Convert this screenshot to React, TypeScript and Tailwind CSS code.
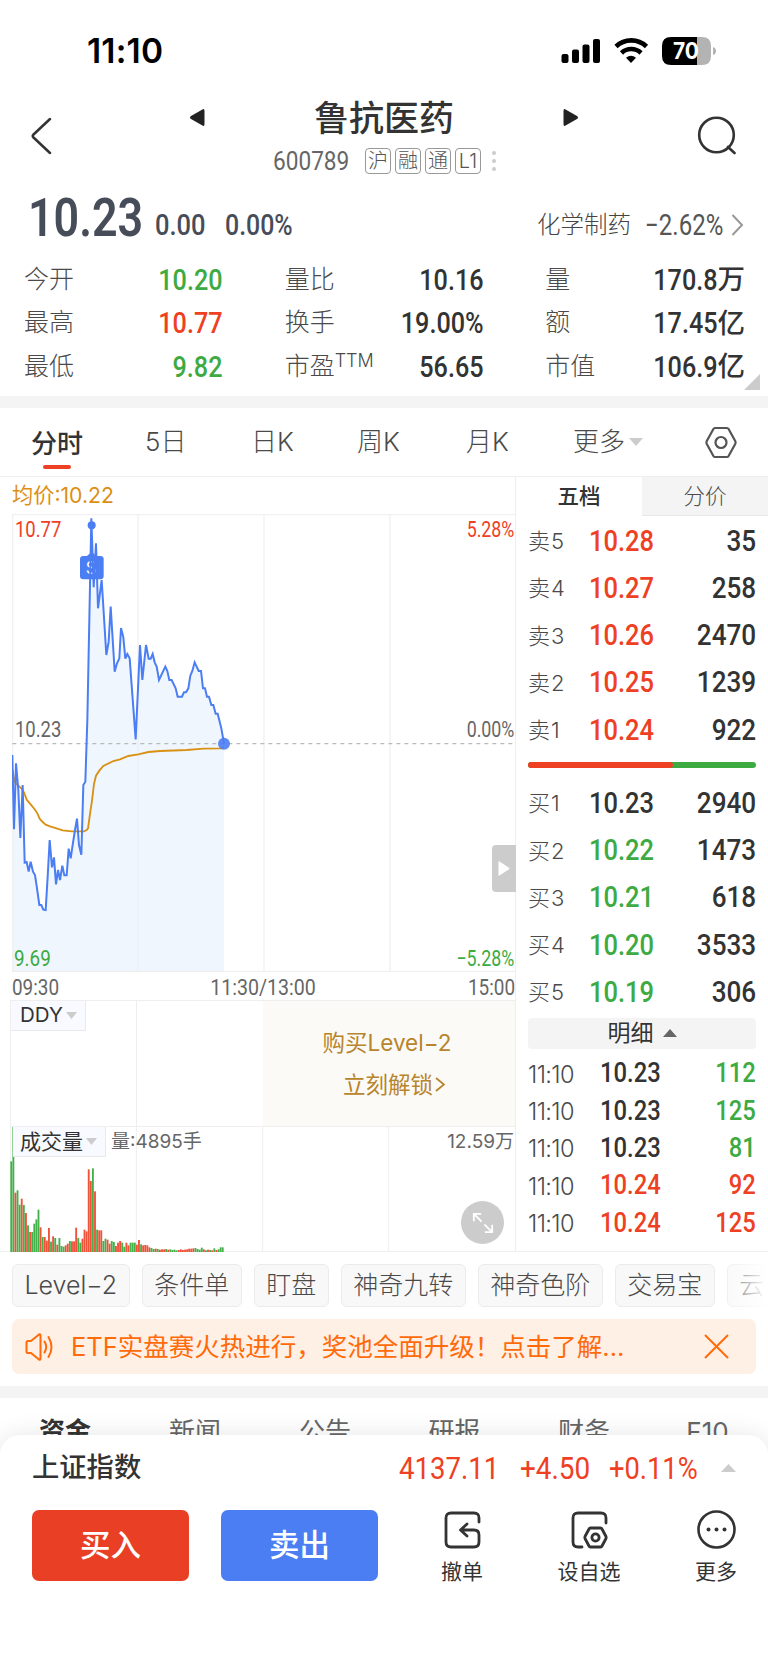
import type { ReactNode } from 'react';
import clsx from 'clsx';

const quotes = [
  { label: '今开', value: '10.20', color: 'text-[#3daa42]' },
  { label: '量比', value: '10.16', color: 'text-[#333]' },
  { label: '量', value: '170.8', unit: '万', color: 'text-[#333]' },
  { label: '最高', value: '10.77', color: 'text-[#ee4023]' },
  { label: '换手', value: '19.00%', color: 'text-[#333]' },
  { label: '额', value: '17.45', unit: '亿', color: 'text-[#333]' },
  { label: '最低', value: '9.82', color: 'text-[#3daa42]' },
  { label: '市盈', sup: 'TTM', value: '56.65', color: 'text-[#333]' },
  { label: '市值', value: '106.9', unit: '亿', color: 'text-[#333]' },
];

const asks = [
  ['卖5', '10.28', '35'],
  ['卖4', '10.27', '258'],
  ['卖3', '10.26', '2470'],
  ['卖2', '10.25', '1239'],
  ['卖1', '10.24', '922'],
];

const bids = [
  ['买1', '10.23', '2940'],
  ['买2', '10.22', '1473'],
  ['买3', '10.21', '618'],
  ['买4', '10.20', '3533'],
  ['买5', '10.19', '306'],
];

const trades = [
  { price: '10.23', vol: '112', up: false },
  { price: '10.23', vol: '125', up: false },
  { price: '10.23', vol: '81', up: false },
  { price: '10.24', vol: '92', up: true },
  { price: '10.24', vol: '125', up: true },
];

const chips = ['Level−2', '条件单', '盯盘', '神奇九转', '神奇色阶', '交易宝', '云'];

const pricePoints =
  '37,723 42,946 48,748 55,828 61,972 68,813 74,1046 80,1044 86,1073 92,1043 99,1073 105,1083 111,1123 118,1173 124,1173 130,1187 137,1188 143,1088 149,978 156,1060 162,1030 168,1111 174,1068 180,1098 187,1055 193,1084 200,1084 206,1004 212,1033 218,993 225,948 231,914 237,993 244,1022 250,813 256,803 262,618 274,13 281,220 288,88 294,283 305,198 319,423 326,383 332,278 344,473 351,448 358,433 363,342 370,370 376,434 382,420 389,433 407,676 420,393 427,498 438,393 446,434 452,434 458,420 464,445 470,458 477,498 496,458 502,471 508,498 515,498 527,523 533,548 546,548 552,535 558,535 565,523 571,485 577,471 584,445 596,471 603,471 609,523 615,523 621,548 627,548 634,573 640,573 647,599 653,599 664,643 672,689';

const avgPoints =
  '38,770 44,805 55,815 64,823 72,835 80,857 92,871 105,887 112,898 119,914 128,924 137,932 150,937 160,940 188,949 215,952 252,952 260,948 264,943 270,900 276,860 282,810 288,785 298,770 310,756 340,741 360,736 385,726 415,721 445,714 480,711 560,708 610,704 664,703 672,700';

// one bar per minute, g = down, r = up
const volumes =
  'g272 g375 r178 g185 g142 r160 g141 r117 g80 r60 g60 g85 g98 g127 r74 g45 r45 r34 r72 g31 r47 g42 r22 g42 g18 g16 r20 r25 g33 r32 r32 r73 g42 g28 r40 r67 r62 r248 r213 g251 r182 g67 r65 r65 g33 g40 r37 r25 g33 g30 r18 r28 r33 g28 g16 r28 r20 g28 g28 g28 r22 r36 g23 r20 r21 r20 r14 g12 g9 r10 g9 r7 r8 r8 g9 r7 g8 g6 g7 g5 r6 r8 r6 r7 r8 r10 r10 r11 g12 g9 g7 g13 r8 g5 r7 g6 r5 g11 r6 g8 g14 g14'.split(' ');

function Num({ children, className }: { children: ReactNode; className?: string }) {
  return (
    <span className={clsx("inline-block whitespace-nowrap font-['Roboto',sans-serif]", className)}>
      {children}
    </span>
  );
}

function StatusBar() {
  return (
    <div className="flex h-[88px] items-start justify-between pl-[87px] pr-[52px]">
      <span className="mt-[33px] text-[33.500px] leading-9 font-semibold tracking-[0.2px] text-black">11:10</span>
      <div className="mt-[37px] flex items-center">
        <svg className="h-7 w-[155px]" viewBox="0 0 155 28">
          <g fill="#000">
            <rect x="0.5" y="17" width="7" height="9" rx="2" />
            <rect x="11" y="12.500" width="7" height="13.500" rx="2" />
            <rect x="21.500" y="7.500" width="7" height="18.500" rx="2" />
            <rect x="32" y="2" width="7" height="24" rx="2" />
            <path d="M70 26l-5-5.200q5-4 10 0z" />
            <path d="M101 9q0-9 9-9h26v28h-26q-9 0-9-9z" />
          </g>
          <g fill="none" stroke="#000" strokeWidth="4.600">
            <path d="M55 9.500a22 22 0 0 1 30.500 0" />
            <path d="M60.500 16a14 14 0 0 1 19.500 0" />
          </g>
          <path d="M136 0h5q9 0 9 9v10q0 9-9 9h-5z" fill="#b3b3b3" />
          <path d="M152 10q3 1 3 4t-3 4z" fill="#b3b3b3" />
          <text x="112" y="22" fontSize="22.500" fontWeight="700" fill="#fff" fontFamily="Inter" textLength="26" lengthAdjust="spacingAndGlyphs">70</text>
        </svg>
      </div>
    </div>
  );
}

function Header() {
  return (
    <header className="flex h-[97px] items-start pl-[31px] pr-[32px]">
      <svg className="mt-[29px] h-[38px] w-[21px]" viewBox="0 0 21 38" fill="none" stroke="#333" strokeWidth="2.500" strokeLinecap="round">
        <path d="M19 2L2.500 17.500q-1.500 1.500 0 3L19 36" />
      </svg>
      <div className="ml-[138px] flex w-[388px] flex-col items-center">
        <div className="flex w-full items-center justify-between pt-1">
          <svg className="h-[17px] w-[15px]" viewBox="0 0 15 17" fill="#222">
            <path d="M14.500 2v13q0 3-2.500 1.300L1 10q-2-1.500 0-3L12 .7q2.500-1.700 2.500 1.300z" />
          </svg>
          <h1 className="pt-0.5 text-[35px] leading-[48px] font-medium text-[#333]">鲁抗医药</h1>
          <svg className="h-[17px] w-[15px]" viewBox="0 0 15 17" fill="#222">
            <path d="M.5 2v13q0 3 2.500 1.300L14 10q2-1.500 0-3L3 .7Q.5-1 .5 2z" />
          </svg>
        </div>
        <div className="mt-[6px] flex h-[26px] w-full items-center pl-[83px]">
          <Num className="w-[92px] origin-left scale-x-[0.87] text-[26px] leading-[26px] text-[#666]">600789</Num>
          <div className="flex gap-1">
            {['沪', '融', '通', 'L1'].map((t) => (
              <span key={t} className="flex h-[26px] w-[26px] items-center justify-center rounded-[4px] border-[1.500px] border-[#999] text-[20px] leading-none font-light text-[#555]">
                {t}
              </span>
            ))}
          </div>
          <div className="ml-[11px] flex flex-col gap-1">
            <i className="size-1 rounded-full bg-[#ccc]" />
            <i className="size-1 rounded-full bg-[#ccc]" />
            <i className="size-1 rounded-full bg-[#ccc]" />
          </div>
        </div>
      </div>
      <svg className="mt-7 ml-auto h-[40px] w-[39px]" viewBox="0 0 39 40" fill="none" stroke="#333" strokeWidth="2.600" strokeLinecap="round">
        <circle cx="19.500" cy="19" r="17.300" />
        <path d="M31 31l6.500 6" />
      </svg>
    </header>
  );
}

function Summary() {
  return (
    <section className="h-[211px]">
      <div className="flex h-[72px] items-end pr-6 pl-[28px]">
        <Num className="mb-[7px] w-[127px] origin-left scale-x-[0.83] text-[54px] leading-[64px] font-semibold text-[#474c59]">10.23</Num>
        <Num className="mb-[14px] w-[70px] origin-left scale-x-[0.85] text-[30px] leading-[36px] font-medium text-[#474c59]">0.00</Num>
        <Num className="mb-[14px] origin-left scale-x-[0.83] text-[30px] leading-[36px] font-medium text-[#474c59]">0.00%</Num>
        <div className="mb-[14px] ml-auto flex h-9 items-center">
          <span className="text-[23.500px] font-light text-[#444]">化学制药</span>
          <Num className="ml-[14px] w-[86px] origin-left scale-x-[0.83] text-[29px] leading-9 text-[#555]">−2.62%</Num>
          <svg className="h-[22px] w-[13px]" viewBox="0 0 13 22" fill="none" stroke="#999" strokeWidth="2">
            <path d="M1.500 1L11 11l-9.500 10" />
          </svg>
        </div>
      </div>
      <div className="relative grid grid-cols-3 gap-x-[62px] pt-[0.500px] pr-6 pl-[24px]">
        {quotes.map((q) => (
          <div key={q.label} className="flex h-[43.500px] items-center justify-between">
            <span className="text-[25px] font-light text-[#4a4a4a]">
              {q.label}
              {q.sup && <sup className="-top-2 text-[18px] leading-none">{q.sup}</sup>}
            </span>
            <span className={clsx('flex items-center', q.color)}>
              <Num className="origin-right scale-x-[0.84] text-[30px] font-medium">{q.value}</Num>
              {q.unit && <span className="-mr-px text-[27.500px] leading-9 font-medium">{q.unit}</span>}
            </span>
          </div>
        ))}
        <svg className="absolute right-2 -bottom-[2px] size-4" viewBox="0 0 16 16" fill="#ccc">
          <path d="M16 0v16H0z" />
        </svg>
      </div>
    </section>
  );
}

function PeriodTabs() {
  return (
    <nav className="flex h-[69px] items-center border-b border-[#eee] pl-[31px] text-[26px] leading-[40px] font-light text-[#4a4a4a]">
      <div className="flex w-[114px] flex-col pt-2">
        <span className="font-medium text-[#333]">分时</span>
        <i className="mt-[1px] ml-[12px] h-1 w-7 rounded-full bg-[#ee4023]" />
      </div>
      <span className="w-[106px]">5日</span>
      <span className="w-[106px]">日K</span>
      <span className="w-[109px]">周K</span>
      <span className="w-[107px]">月K</span>
      <span>更多</span>
      <svg className="ml-1 h-2 w-[14px]" viewBox="0 0 14 8" fill="#ccc">
        <path d="M0 0h14L7 8z" />
      </svg>
      <svg className="ml-[62px] h-[33px] w-[32px]" viewBox="0 0 32 33" fill="none" stroke="#555" strokeWidth="2.200">
        <path d="M10 2h12q1 0 1.600 1l6.600 12q.7 1.500 0 3l-6.600 12q-.6 1-1.600 1H10q-1 0-1.600-1L1.800 18q-.7-1.500 0-3L8.400 3Q9 2 10 2z" />
        <circle cx="16" cy="16.500" r="5.500" />
      </svg>
    </nav>
  );
}

function PriceChart() {
  return (
    <div className="relative h-[459px]">
      <svg className="ml-[12px] block h-[458px] w-[504px]" viewBox="36 0 1512 1374">
        <polygon points={`37,1374 ${pricePoints} 672,1374`} fill="#eff6fe" />
        <g stroke="#eee" strokeWidth="4" strokeOpacity="0.8">
          <path d="M38 0V1374M414 0V1374M792 0V1374M1170 0V1374" />
          <path d="M36 2H1548M36 1372H1548" />
        </g>
        <path d="M37 689H1548" stroke="#bbb" strokeWidth="4" strokeDasharray="12 12" />
        <polyline points={avgPoints} fill="none" stroke="#d99114" strokeWidth="5.500" />
        <rect x="240" y="126" width="71" height="70" rx="10" fill="#4b7df3" />
        <path d="M258 128l17-14 17 14z" fill="#4b7df3" />
        <text x="257" y="179" fontSize="50" fontFamily="Inter" fill="#fff">S</text>
        <polyline points={pricePoints} fill="none" stroke="#4b7df3" strokeWidth="6" />
        <circle cx="275" cy="34" r="12" fill="#4b7df3" />
        <circle cx="672" cy="689" r="18" fill="#4b7df3" fillOpacity="0.9" />
      </svg>
      {/* axis labels over the plot */}
      <div className="absolute inset-0 text-[22.500px] leading-6 text-[#666]">
        <Num className="absolute top-[3px] left-[15px] origin-left scale-x-[0.82] text-[#ee4023]">10.77</Num>
        <Num className="absolute top-[203px] left-[15px] origin-left scale-x-[0.82]">10.23</Num>
        <Num className="absolute bottom-[3px] left-[14px] origin-left scale-x-[0.84] text-[#3daa42]">9.69</Num>
        <Num className="absolute top-[3px] right-[1px] origin-right scale-x-[0.79] text-[#ee4023]">5.28%</Num>
        <Num className="absolute top-[203px] right-[1px] origin-right scale-x-[0.79]">0.00%</Num>
        <Num className="absolute right-[1px] bottom-[3px] origin-right scale-x-[0.79] text-[#3daa42]">−5.28%</Num>
      </div>
      <div className="absolute top-[331px] -right-px flex h-[47px] w-6 items-center justify-center rounded-l-[4px] bg-[#ccc]">
        <svg className="h-[15px] w-3" viewBox="0 0 12 15" fill="#fff">
          <path d="M.5 1v13q0 1 1 .6l9.500-6.400q.8-.7 0-1.400L1.500.4Q.5 0 .5 1z" />
        </svg>
      </div>
    </div>
  );
}

function Caret() {
  return (
    <svg className="ml-[3px] h-[7px] w-[11px]" viewBox="0 0 11 7" fill="#ccc">
      <path d="M0 0h11L5.500 7z" />
    </svg>
  );
}

function ChartPanel() {
  return (
    <div className="h-[775px] w-[516px] border-r border-[#eee]">
      <div className="h-[37px] pl-3 text-[21.200px] leading-[37px] text-[#dc8f14]">均价:10.22</div>
      <PriceChart />
      <div className="flex h-[27px] items-center justify-between pl-3 text-[22.500px] leading-[28px] text-[#666]">
        <Num className="w-[60px] origin-left scale-x-[0.84]">09:30</Num>
        <Num className="w-[126px] origin-center scale-x-[0.87]">11:30/13:00</Num>
        <Num className="origin-right scale-x-[0.84]">15:00</Num>
      </div>
      <div className="ml-[10px] flex h-[126px] border-t border-l border-[#eee]">
        <div className="w-[126px] border-r border-[#eee]">
          <button className="flex h-[30px] w-[75px] items-center border-r border-b border-[#e8e9ec] bg-[#f9faff] pl-[9px] text-[20.500px] leading-none text-[#333]">
            DDY
            <Caret />
          </button>
        </div>
        <div className="w-[126px]" />
        <button className="flex flex-1 flex-col items-center justify-center bg-[#fbfaf6] text-[22.500px] leading-[41.500px] text-[#b8842c]">
          <span className="-ml-1">购买Level−2</span>
          <span className="ml-2.5 flex items-center">
            立刻解锁
            <svg className="ml-0.5 h-[15px] w-[10px]" viewBox="0 0 10 15" fill="none" stroke="#b8842c" strokeWidth="1.800">
              <path d="M1 1l8 6.500L1 14" />
            </svg>
          </span>
        </button>
      </div>
      <div className="relative ml-[10px] h-[126px] border-y border-[#eee]">
        <svg className="block h-[125px] w-[506px]" viewBox="0 0 1518 375">
          <path d="M1 0V375M379 0V375M758 0V375M1136 0V375" stroke="#eee" strokeWidth="3" />
          {volumes.map((v, i) => {
            const h = Number(v.slice(1));
            return <rect key={i} x={i * 6.28 + 1} y={375 - h} width={5.6} height={h} fill={v[0] === 'g' ? '#43b04b' : '#ef5238'} />;
          })}
        </svg>
        <div className="absolute top-0 left-[3px] flex items-center">
          <button className="flex h-[30px] w-[93px] items-center border-r border-b border-[#e8e9ec] bg-[#f9faff] pl-[7px] text-[21px] leading-none text-[#333]">
            成交量
            <Caret />
          </button>
          <span className="ml-[5px] -mt-0.5 text-[19px] leading-none text-[#666]">量:4895手</span>
        </div>
        <span className="absolute top-[3px] right-[1px] text-[19px] leading-6 text-[#666]">12.59万</span>
        <button className="absolute right-[11px] bottom-[7px] flex size-[43px] items-center justify-center rounded-full bg-[#ccc]">
          <svg className="size-[22px]" viewBox="0 0 24 24" fill="none" stroke="#fff" strokeWidth="2">
            <path d="M2 10V2h8M2 2l8.500 8.500M22 14v8h-8M22 22l-8.500-8.500" />
          </svg>
        </button>
      </div>
    </div>
  );
}

function DepthRows({ rows, side }: { rows: string[][]; side: 'ask' | 'bid' }) {
  return (
    <div>
      {rows.map(([label, price, vol]) => (
        <div key={label} className="flex h-[47.250px] items-center text-[30px] leading-[40px] font-medium text-[#333]">
          <span className="w-[61px] pt-[1px] text-[22px] font-light tracking-[1px] text-[#4a4a4a]">{label}</span>
          <Num className={clsx('origin-left scale-x-[0.85]', side === 'ask' ? 'text-[#ee4023]' : price !== '10.23' && 'text-[#3daa42]')}>
            {price}
          </Num>
          <Num className="ml-auto origin-right scale-x-[0.87]">{vol}</Num>
        </div>
      ))}
    </div>
  );
}

function OrderBook() {
  return (
    <aside className="flex h-[775px] w-[252px] flex-col">
      <div className="flex h-[39px] text-[21.500px] leading-[39px]">
        <span className="w-[126px] text-center font-medium text-[#333]">五档</span>
        <span className="flex-1 border-b border-[#e8e8e8] bg-[#f4f4f4] text-center font-light text-[#4a4a4a]">分价</span>
      </div>
      <div className="flex flex-1 flex-col pr-3 pl-[12px]">
        <div className="pt-[1px]">
          <DepthRows rows={asks} side="ask" />
        </div>
        <div className="mt-[9px] mb-[11px] flex h-1.5 overflow-hidden rounded-full bg-[#3daa42]">
          <i className="w-[145px] rounded-r-full bg-[#ee4023]" />
        </div>
        <DepthRows rows={bids} side="bid" />
        <div className="mt-[2px] flex h-[31px] items-center justify-center rounded-[4px] bg-[#f4f4f4] text-[23px] leading-none text-[#333]">
          明细
          <svg className="ml-[9px] h-2 w-[14px]" viewBox="0 0 14 8" fill="#666">
            <path d="M0 8h14L7 0z" />
          </svg>
        </div>
        <div className="pt-[6px]">
          {trades.map((t, i) => (
            <div key={i} className="flex h-[37.400px] items-center text-[28px] font-medium text-[#333]">
              <span className="w-[72px] pt-0.5 text-[23.500px] font-light text-[#4a4a4a]">
                <span className="inline-block origin-left tracking-tight">11:10</span>
              </span>
              <Num className={clsx('origin-left scale-x-[0.85]', t.up && 'text-[#ee4023]')}>{t.price}</Num>
              <Num className={clsx('ml-auto origin-right scale-x-[0.85]', t.up ? 'text-[#ee4023]' : 'text-[#3daa42]')}>{t.vol}</Num>
            </div>
          ))}
        </div>
      </div>
    </aside>
  );
}

function Chips() {
  return (
    <div className="relative mt-3 flex h-[43px] gap-3 overflow-hidden pl-3">
      {chips.map((c) => (
        <span key={c} className="flex shrink-0 items-center rounded-[6px] border border-[#ebebeb] bg-[#f8f8f8] px-[11.500px] text-[25px] leading-none font-light text-[#4a4a4a]">
          {c}
        </span>
      ))}
      <div className="absolute inset-y-0 right-0 w-11 bg-linear-to-r from-white/20 to-white" />
    </div>
  );
}

function Banner() {
  return (
    <div className="mx-3 mt-3 flex h-[55px] items-center rounded-[7px] bg-[#fff0e5] px-[13px] text-[#ff6a0a]">
      <svg className="h-[28px] w-[29px]" viewBox="0 0 29 28" fill="none" stroke="currentColor" strokeWidth="2" strokeLinejoin="round" strokeLinecap="round">
        <path d="M14 1.500q1.500-.8 1.500 1v23q0 1.800-1.500 1L6 20H3q-1.500 0-1.500-1.500v-9Q1.500 8 3 8h3z" />
        <path d="M19.500 8.500q3.500 5.500 0 11M23.500 4q6 10 0 20" />
      </svg>
      <span className="ml-[17px] text-[25.500px] leading-none">ETF实盘赛火热进行，奖池全面升级！点击了解...</span>
      <svg className="mr-[14px] ml-auto size-[25px]" viewBox="0 0 25 25" fill="none" stroke="currentColor" strokeWidth="2">
        <path d="M1 1l23 23M24 1L1 24" />
      </svg>
    </div>
  );
}

function BottomBar() {
  return (
    <footer className="relative h-[228px] rounded-t-[20px] bg-white px-8 shadow-[0_0_24px_rgba(0,0,0,0.1)]">
      <div className="flex h-[66px] items-center">
        <span className="text-[27.300px] leading-none font-medium text-[#333]">上证指数</span>
        <div className="ml-auto flex items-center text-[31px] leading-none text-[#ee4023]">
          <Num className="w-[121px] origin-left scale-x-[0.89]">4137.11</Num>
          <Num className="w-[89px] origin-left scale-x-[0.9]">+4.50</Num>
          <Num className="w-[112px] origin-left scale-x-[0.88]">+0.11%</Num>
          <svg className="h-2 w-[15px]" viewBox="0 0 15 8" fill="#ccc">
            <path d="M0 8h15L7.500 0z" />
          </svg>
        </div>
      </div>
      <div className="mt-[9px] flex h-[71px] items-start text-[30.500px] leading-none font-medium text-white">
        <button className="h-[71px] w-[157px] rounded-[7px] bg-[#e94025]">买入</button>
        <button className="ml-8 h-[71px] w-[157px] rounded-[7px] bg-[#4b7df3]">卖出</button>
        <div className="ml-[60px] flex flex-1 justify-between text-[21px] font-normal text-[#333]">
          <button className="flex flex-col items-center pl-[3px]">
            <svg className="size-[39px]" viewBox="0 0 39 39" fill="none" stroke="#333" strokeWidth="2.800" strokeLinecap="round" strokeLinejoin="round">
              <path d="M36 12V8q0-5-5-5H8Q3 3 3 8v24q0 5 5 5h23q5 0 5-5v-7q0-5-5-5H18M24 14l-6.500 6 6.500 6" />
            </svg>
            <span className="mt-[12px]">撤单</span>
          </button>
          <button className="flex flex-col items-center">
            <svg className="size-[39px]" viewBox="0 0 39 39" fill="none" stroke="#333" strokeWidth="2.800" strokeLinecap="round" strokeLinejoin="round">
              <path d="M36 13V8q0-5-5-5H8Q3 3 3 8v24q0 5 5 5h4" />
              <path d="M20.500 18h10q1 0 1.500 1l4 7.500q.4 1 0 2L32 36q-.5 1-1.500 1h-10q-1 0-1.500-1l-4-7.500q-.4-1 0-2L19 19q.5-1 1.500-1z" />
              <circle cx="25.500" cy="27.500" r="3.600" />
            </svg>
            <span className="mt-[12px]">设自选</span>
          </button>
          <button className="-mr-px flex flex-col items-center">
            <svg className="size-[39px]" viewBox="0 0 39 39">
              <circle cx="19.500" cy="19.500" r="18" fill="none" stroke="#333" strokeWidth="2.600" />
              <g fill="#333">
                <circle cx="11.500" cy="19.500" r="2" />
                <circle cx="19.500" cy="19.500" r="2" />
                <circle cx="27.500" cy="19.500" r="2" />
              </g>
            </svg>
            <span className="mt-[12px]">更多</span>
          </button>
        </div>
      </div>
    </footer>
  );
}

export default function App() {
  return (
    <div className="h-[1663px] w-[768px] overflow-hidden bg-white font-['Inter','Noto_Sans_CJK_SC',sans-serif]">
      <StatusBar />
      <Header />
      <Summary />
      <div className="h-3 bg-[#f4f4f4]" />
      <PeriodTabs />
      <div className="flex h-[775px] border-b border-[#eee]">
        <ChartPanel />
        <OrderBook />
      </div>
      <Chips />
      <Banner />
      <div className="mt-3 h-3 bg-[#f4f4f4]" />
      <div className="flex h-[37px] overflow-hidden pt-[15px] text-[26px] leading-[38px] text-[#666]">
        <span className="w-[130px] text-center font-bold text-[#333]">资金</span>
        <span className="w-[130px] text-center">新闻</span>
        <span className="w-[130px] text-center">公告</span>
        <span className="w-[129px] text-center">研报</span>
        <span className="w-[130px] text-center">财务</span>
        <span className="w-[117px] text-center">F10</span>
      </div>
      <BottomBar />
    </div>
  );
}
